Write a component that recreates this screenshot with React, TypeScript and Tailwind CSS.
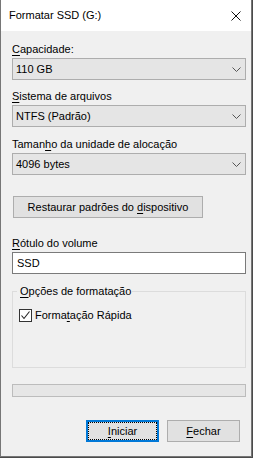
import React from 'react';

function Key({ children }: { children: React.ReactNode }) {
  return <span className="underline decoration-1 underline-offset-[2px]">{children}</span>;
}

function Label({ children, className }: { children: React.ReactNode; className: string }) {
  return <div className={`ml-[11px] h-[13px] leading-[13px] ${className}`}>{children}</div>;
}

function Combo({ value }: { value: string }) {
  return (
    <div className="ml-[11px] mt-[2px] flex h-[22px] w-[234px] items-center justify-between border border-[#adadad] bg-[#e5e5e5] pl-[3px] pr-[4px]">
      <span className="leading-[13px]">{value}</span>
      <svg width="9" height="5" viewBox="0 0 9 5">
        <path d="M0.5 0.5 L4.5 4.5 L8.5 0.5" stroke="#555" strokeWidth="1" fill="none" />
      </svg>
    </div>
  );
}

export default function App() {
  return (
    <div className="h-[458px] w-[253px] bg-[#4b4b4b] font-['Liberation_Sans',Arial,sans-serif] text-[11px] text-black">
      <div className="h-[457px] w-[252px] border-x border-b border-[#767676] bg-[#f0f0f0]">
        <div className="flex h-[31px] items-center justify-between bg-white pl-[8px] pr-[10px]">
          <span className="leading-[13px]">Formatar SSD (G:)</span>
          <svg width="10" height="10" viewBox="0 0 10 10">
            <path d="M0.5 0.5 L9.5 9.5 M9.5 0.5 L0.5 9.5" stroke="#111" strokeWidth="1" fill="none" />
          </svg>
        </div>

        <Label className="mt-[12px]">
          <Key>C</Key>apacidade:
        </Label>
        <Combo value="110 GB" />

        <Label className="mt-[10px]">
          <Key>S</Key>istema de arquivos
        </Label>
        <Combo value="NTFS (Padrão)" />

        <Label className="mt-[11px]">
          Taman<Key>h</Key>o da unidade de alocação
        </Label>
        <Combo value="4096 bytes" />

        <button
          type="button"
          className="ml-[12px] mt-[21px] flex h-[22px] w-[190px] items-center justify-center border border-[#adadad] bg-[#e1e1e1] leading-[13px]"
        >
          <span>
            Restaurar padrões do <Key>d</Key>ispositivo
          </span>
        </button>

        <Label className="mt-[19px]">
          <Key>R</Key>ótulo do volume
        </Label>
        <div className="ml-[11px] mt-[2px] flex h-[22px] w-[234px] items-center border border-[#7a7a7a] bg-white pl-[4px]">
          <span className="leading-[13px]">SSD</span>
        </div>

        <fieldset className="ml-[11px] mt-[11px] h-[83px] w-[234px] border border-[#dcdcdc]">
          <legend className="ml-[4px] pl-[3px] pr-[1px] leading-[13px]">
            <Key>O</Key>pções de formatação
          </legend>
          <div className="ml-[6px] mt-[10px] flex h-[14px] items-center gap-[3px]">
            <span className="flex h-[13px] w-[13px] items-center justify-center border border-[#333] bg-white">
              <svg width="11" height="11" viewBox="0 0 11 11">
                <path d="M1.5 5.5 L4 8.5 L9.5 1.5" stroke="#222" strokeWidth="1.1" fill="none" />
              </svg>
            </span>
            <span className="leading-[13px]">
              Forma<Key>t</Key>ação Rápida
            </span>
          </div>
        </fieldset>

        <div className="ml-[11px] mt-[16px] h-[13px] w-[234px] border border-[#bcbcbc] bg-[#e6e6e6]" />

        <div className="mt-[23px] flex justify-end gap-[8px] pr-[11px]">
          <button type="button" className="h-[22px] w-[73px] border-2 border-[#0078d7] bg-[#e1e1e1]">
            <span className="flex h-full w-full items-center justify-center border border-dotted border-black leading-[13px]">
              <span>
                <Key>I</Key>niciar
              </span>
            </span>
          </button>
          <button
            type="button"
            className="flex h-[22px] w-[73px] items-center justify-center border border-[#adadad] bg-[#e1e1e1] leading-[13px]"
          >
            <span>
              <Key>F</Key>echar
            </span>
          </button>
        </div>
      </div>
    </div>
  );
}
